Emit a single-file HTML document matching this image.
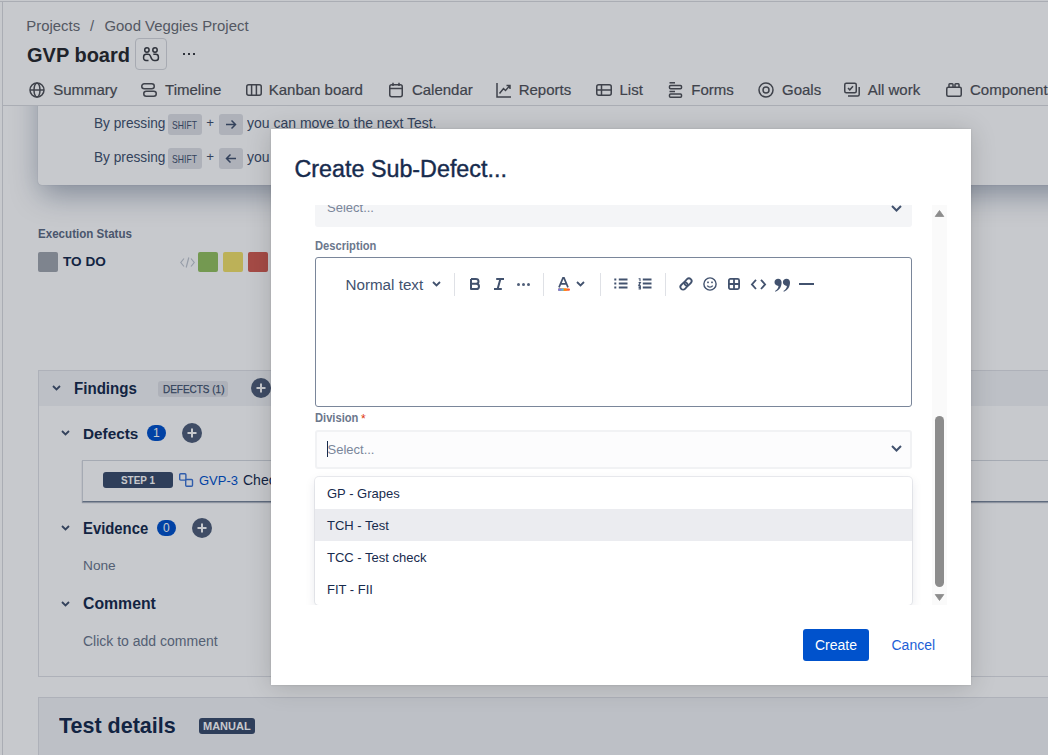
<!DOCTYPE html>
<html><head><meta charset="utf-8">
<style>
*{box-sizing:border-box;margin:0;padding:0}
html,body{width:1048px;height:755px;overflow:hidden;background:#fff;font-family:"Liberation Sans",sans-serif;position:relative}
.t{position:absolute;line-height:1;white-space:nowrap}
.a{position:absolute}
svg{position:absolute;overflow:visible}
</style></head><body>

<!-- page frame lines -->
<div class="a" style="left:0;top:1px;width:1048px;height:1px;background:#dadbdf"></div>
<div class="a" style="left:2px;top:2px;width:1px;height:753px;background:#dadbdf"></div>

<!-- background card (keyboard hints) -->
<div class="a" style="left:38px;top:40px;width:1100px;height:145px;background:#fff;border-radius:4px;box-shadow:0 12px 30px -3px rgba(9,30,66,.37),0 0 1px rgba(9,30,66,.3)"></div>
<div class="t" style="left:94px;top:115.7px;font-size:14.4px;color:#42526e;transform:scaleX(.95);transform-origin:0 0">By pressing</div>
<div class="a" style="left:168px;top:114px;width:34px;height:21px;background:#dfe1e6;border-radius:3px"></div>
<div class="t" style="left:172.3px;top:119.5px;font-size:10.8px;color:#42526e;transform:scaleX(.8);transform-origin:0 0">SHIFT</div>
<div class="t" style="left:206.3px;top:116px;font-size:13.3px;color:#42526e">+</div>
<div class="a" style="left:219px;top:114px;width:24px;height:21px;background:#dfe1e6;border-radius:3px"></div>
<svg style="left:225px;top:118.5px" width="12" height="11" viewBox="0 0 12 11" fill="none" stroke="#42526e" stroke-width="1.5"><path d="M1 5.5H10.5M6.5 1.5L10.5 5.5L6.5 9.5"/></svg>
<div class="t" style="left:246.5px;top:115.7px;font-size:14.4px;color:#42526e;transform:scaleX(.972);transform-origin:0 0">you can move to the next Test.</div>

<div class="t" style="left:94px;top:149.7px;font-size:14.4px;color:#42526e;transform:scaleX(.95);transform-origin:0 0">By pressing</div>
<div class="a" style="left:168px;top:148px;width:34px;height:21px;background:#dfe1e6;border-radius:3px"></div>
<div class="t" style="left:172.3px;top:153.5px;font-size:10.8px;color:#42526e;transform:scaleX(.8);transform-origin:0 0">SHIFT</div>
<div class="t" style="left:206.3px;top:150px;font-size:13.3px;color:#42526e">+</div>
<div class="a" style="left:219px;top:148px;width:24px;height:21px;background:#dfe1e6;border-radius:3px"></div>
<svg style="left:225px;top:152.5px" width="12" height="11" viewBox="0 0 12 11" fill="none" stroke="#42526e" stroke-width="1.5"><path d="M11 5.5H1.5M5.5 1.5L1.5 5.5L5.5 9.5"/></svg>
<div class="t" style="left:246.5px;top:149.7px;font-size:14.4px;color:#42526e;transform:scaleX(.972);transform-origin:0 0">you can move to the previous Test.</div>

<!-- execution status -->
<div class="t" style="left:38px;top:227.8px;font-size:12.4px;font-weight:700;color:#5e6c84;transform:scaleX(.935);transform-origin:0 0">Execution Status</div>
<div class="a" style="left:38px;top:252px;width:20px;height:20px;background:#a2a6ae;border-radius:2px"></div>
<div class="t" style="left:63px;top:255px;font-size:13.6px;font-weight:700;color:#172b4d">TO DO</div>
<svg style="left:180px;top:257px" width="15" height="11" viewBox="0 0 15 11" fill="none" stroke="#c1c7d0" stroke-width="1.2">
 <path d="M4 1.5L0.8 5.5L4 9.5M11 1.5L14.2 5.5L11 9.5M8.8 0.5L6.2 10.5"/>
</svg>
<div class="a" style="left:198px;top:252px;width:20px;height:20px;background:#95c160;border-radius:2px"></div>
<div class="a" style="left:223px;top:252px;width:20px;height:20px;background:#f1e069;border-radius:2px"></div>
<div class="a" style="left:248px;top:252px;width:20px;height:20px;background:#d45d52;border-radius:2px"></div>

<!-- findings panel -->
<div class="a" style="left:38px;top:370px;width:1100px;height:307px;border:1px solid #dfe1e6;border-radius:0"></div>
<div class="a" style="left:39px;top:371px;width:1100px;height:35px;background:#f3f4f6"></div>
<svg style="left:52px;top:385px" width="9" height="6" viewBox="0 0 9 6" fill="none" stroke="#42526e" stroke-width="1.8"><path d="M1 1L4.5 4.5L8 1"/></svg>
<div class="t" style="left:74px;top:380.6px;font-size:15.8px;font-weight:700;color:#172b4d;transform:scaleX(.956);transform-origin:0 0">Findings</div>
<div class="a" style="left:158px;top:381px;width:70px;height:16px;background:#dfe1e6;border-radius:3px"></div>
<div class="t" style="left:162.5px;top:383.5px;font-size:11.4px;color:#42526e;-webkit-text-stroke:.25px #42526e;transform:scaleX(.875);transform-origin:0 0">DEFECTS (1)</div>
<div class="a" style="left:251px;top:378px;width:20px;height:20px;background:#505f79;border-radius:50%"></div>
<svg style="left:251px;top:378px" width="20" height="20" viewBox="0 0 20 20" fill="none" stroke="#fff" stroke-width="2"><path d="M10 5.5V14.5M5.5 10H14.5"/></svg>

<svg style="left:61px;top:430px" width="9" height="6" viewBox="0 0 9 6" fill="none" stroke="#42526e" stroke-width="1.8"><path d="M1 1L4.5 4.5L8 1"/></svg>
<div class="t" style="left:83px;top:426px;font-size:15.3px;font-weight:700;color:#172b4d">Defects</div>
<div class="a" style="left:147px;top:425px;width:19px;height:16px;background:#0052cc;border-radius:8px"></div>
<div class="t" style="left:153px;top:427px;font-size:12px;color:#fff">1</div>
<div class="a" style="left:182px;top:423px;width:20px;height:20px;background:#505f79;border-radius:50%"></div>
<svg style="left:182px;top:423px" width="20" height="20" viewBox="0 0 20 20" fill="none" stroke="#fff" stroke-width="2"><path d="M10 5.5V14.5M5.5 10H14.5"/></svg>

<div class="a" style="left:82px;top:460px;width:1100px;height:42px;border:1px solid #d3d7de;border-bottom:1px solid #7a869a;box-shadow:0 1px 1px rgba(9,30,66,.3)"></div>
<div class="a" style="left:103px;top:472px;width:70px;height:16px;background:#3b4c6b;border-radius:3px"></div>
<div class="t" style="left:120.5px;top:475px;font-size:11px;font-weight:700;color:#fff;transform:scaleX(.9);transform-origin:0 0">STEP 1</div>
<svg style="left:179px;top:473px" width="15" height="15" viewBox="0 0 15 15" fill="none" stroke="#3d74d4" stroke-width="1.4"><rect x="0.7" y="0.7" width="6.2" height="6.4" rx="1"/><rect x="6.7" y="6.5" width="6.8" height="6.8" rx="1"/></svg>
<div class="t" style="left:199px;top:474px;font-size:13px;color:#0052cc">GVP-3</div>
<div class="t" style="left:243px;top:473.2px;font-size:14px;color:#172b4d">Check</div>

<svg style="left:61px;top:525px" width="9" height="6" viewBox="0 0 9 6" fill="none" stroke="#42526e" stroke-width="1.8"><path d="M1 1L4.5 4.5L8 1"/></svg>
<div class="t" style="left:83px;top:520.6px;font-size:15.8px;font-weight:700;color:#172b4d;transform:scaleX(.94);transform-origin:0 0">Evidence</div>
<div class="a" style="left:157px;top:520px;width:19px;height:16px;background:#0052cc;border-radius:8px"></div>
<div class="t" style="left:163px;top:522px;font-size:12px;color:#fff">0</div>
<div class="a" style="left:192px;top:518px;width:20px;height:20px;background:#505f79;border-radius:50%"></div>
<svg style="left:192px;top:518px" width="20" height="20" viewBox="0 0 20 20" fill="none" stroke="#fff" stroke-width="2"><path d="M10 5.5V14.5M5.5 10H14.5"/></svg>

<div class="t" style="left:83px;top:559.4px;font-size:13.7px;color:#6b778c">None</div>
<svg style="left:61px;top:601px" width="9" height="6" viewBox="0 0 9 6" fill="none" stroke="#42526e" stroke-width="1.8"><path d="M1 1L4.5 4.5L8 1"/></svg>
<div class="t" style="left:83px;top:595.6px;font-size:15.8px;font-weight:700;color:#172b4d">Comment</div>
<div class="t" style="left:83px;top:634.1px;font-size:14px;color:#6b778c">Click to add comment</div>

<!-- test details panel -->
<div class="a" style="left:38px;top:697px;width:1100px;height:100px;border:1px solid #dfe1e6;border-radius:0;background:#f3f4f6"></div>
<div class="t" style="left:59px;top:714.8px;font-size:22.5px;font-weight:700;color:#172b4d;transform:scaleX(.955);transform-origin:0 0">Test details</div>
<div class="a" style="left:199px;top:718px;width:56px;height:16px;background:#3b4c6b;border-radius:3px"></div>
<div class="t" style="left:203px;top:721px;font-size:11px;font-weight:700;color:#fff">MANUAL</div>

<!-- header -->
<div class="a" style="left:3px;top:2px;width:1045px;height:103px;background:#fff"></div>
<div class="a" style="left:3px;top:105px;width:1045px;height:1px;background:#dadbdf"></div>
<div class="t" style="left:26.3px;top:19px;font-size:14.9px;color:#6b6e76">Projects</div>
<div class="t" style="left:90px;top:19.1px;font-size:14.7px;color:#6b6e76">/</div>
<div class="t" style="left:104.5px;top:19px;font-size:14.9px;color:#6b6e76">Good Veggies Project</div>
<div class="t" style="left:27px;top:45.2px;font-size:20px;font-weight:700;color:#292a2e">GVP board</div>
<div class="a" style="left:135px;top:38px;width:32px;height:32px;border:1px solid #d6d8dc;border-radius:4px"></div>
<svg style="left:143px;top:46px" width="16" height="16" viewBox="0 0 16 16" fill="none" stroke="#3b3d43" stroke-width="1.5">
 <circle cx="3.9" cy="4" r="2.2"/><circle cx="12" cy="4" r="2.2"/>
 <path d="M5.5 14.4H3C1.6 14.4 0.6 13.3 0.6 11.9V11C0.6 9.5 1.8 8.3 3.3 8.3H5C6.2 8.3 7 9 7.5 10.2L8.4 12.4C9 13.8 9.8 14.4 11 14.4H13C14.4 14.4 15.4 13.3 15.4 11.9V11C15.4 9.5 14.2 8.3 12.7 8.3H10.3"/>
</svg>
<div class="a" style="left:183px;top:53px;width:2px;height:2px;background:#3b3d43"></div>
<div class="a" style="left:188px;top:53px;width:2px;height:2px;background:#3b3d43"></div>
<div class="a" style="left:193px;top:53px;width:2px;height:2px;background:#3b3d43"></div>

<!-- tabs -->
<div class="t" style="left:53.2px;top:82.3px;font-size:15px;color:#505258;-webkit-text-stroke:.2px #505258">Summary</div>
<div class="t" style="left:165.1px;top:82.3px;font-size:15px;color:#505258;-webkit-text-stroke:.2px #505258">Timeline</div>
<div class="t" style="left:268.7px;top:82.3px;font-size:15px;color:#505258;-webkit-text-stroke:.2px #505258">Kanban board</div>
<div class="t" style="left:411.9px;top:82.3px;font-size:15px;color:#505258;-webkit-text-stroke:.2px #505258">Calendar</div>
<div class="t" style="left:518.7px;top:82.3px;font-size:15px;color:#505258;-webkit-text-stroke:.2px #505258">Reports</div>
<div class="t" style="left:619.5px;top:82.3px;font-size:15px;color:#505258;-webkit-text-stroke:.2px #505258">List</div>
<div class="t" style="left:691.3px;top:82.3px;font-size:15px;color:#505258;-webkit-text-stroke:.2px #505258">Forms</div>
<div class="t" style="left:782px;top:82.3px;font-size:15px;color:#505258;-webkit-text-stroke:.2px #505258">Goals</div>
<div class="t" style="left:867.7px;top:82.3px;font-size:15px;color:#505258;-webkit-text-stroke:.2px #505258">All work</div>
<div class="t" style="left:970px;top:82.3px;font-size:15px;color:#505258;-webkit-text-stroke:.2px #505258">Components</div>
<g></g>
<svg style="left:29px;top:82px" width="16" height="16" viewBox="0 0 16 16" fill="none" stroke="#505258" stroke-width="1.5">
 <circle cx="8" cy="8" r="7"/><path d="M1 8H15"/><ellipse cx="8" cy="8" rx="3" ry="7"/>
</svg>
<svg style="left:141px;top:82px" width="16" height="16" viewBox="0 0 16 16" fill="none" stroke="#505258" stroke-width="1.5">
 <rect x="0.75" y="1.75" width="12.5" height="5" rx="2.5"/><rect x="2.75" y="9.25" width="12.5" height="5" rx="2.5"/>
</svg>
<svg style="left:246px;top:82px" width="16" height="16" viewBox="0 0 16 16" fill="none" stroke="#505258" stroke-width="1.5">
 <rect x="0.75" y="2.75" width="14.5" height="10.5" rx="2"/><path d="M5.6 2.75V13.25M10.4 2.75V13.25"/>
</svg>
<svg style="left:388px;top:82px" width="16" height="16" viewBox="0 0 16 16" fill="none" stroke="#505258" stroke-width="1.5">
 <rect x="1.75" y="2.75" width="12.5" height="12" rx="2"/><path d="M1.75 6.5H14.25M5 0.8V4M11 0.8V4"/>
</svg>
<svg style="left:496px;top:82px" width="16" height="16" viewBox="0 0 16 16" fill="none" stroke="#505258" stroke-width="1.5">
 <path d="M1 1V15H15"/><path d="M3.5 11.5L7.5 6.5L9.5 8.5L14 3.5M10.5 3.5H14V7"/>
</svg>
<svg style="left:596px;top:82px" width="16" height="16" viewBox="0 0 16 16" fill="none" stroke="#505258" stroke-width="1.5">
 <rect x="0.75" y="2.75" width="14.5" height="10.5" rx="2"/><path d="M0.75 8H15.25M5.5 2.75V13.25"/>
</svg>
<svg style="left:668px;top:82px" width="16" height="16" viewBox="0 0 16 16" fill="none" stroke="#505258" stroke-width="1.5">
 <path d="M1.5 0.8H7"/><rect x="1.5" y="3.5" width="12" height="3.2" rx="1"/><path d="M1.5 9.5H7"/><rect x="1.5" y="12" width="12" height="3.2" rx="1"/>
</svg>
<svg style="left:758px;top:82px" width="16" height="16" viewBox="0 0 16 16" fill="none" stroke="#505258" stroke-width="1.5">
 <circle cx="8" cy="8" r="7"/><circle cx="8" cy="8" r="3"/>
</svg>
<svg style="left:844px;top:82px" width="16" height="16" viewBox="0 0 16 16" fill="none" stroke="#505258" stroke-width="1.5">
 <rect x="0.75" y="1.25" width="11.5" height="9.5" rx="1.5"/><path d="M4 6L5.8 7.8L9 4.3"/><path d="M15.2 5V12.5C15.2 13.3 14.5 14 13.7 14H4"/>
</svg>
<svg style="left:946px;top:82px" width="16" height="16" viewBox="0 0 16 16" fill="none" stroke="#505258" stroke-width="1.5">
 <rect x="0.75" y="5.25" width="14.5" height="9" rx="1.5"/><path d="M3 5.25V2.5C3 2 3.4 1.75 3.8 1.75H6.2C6.6 1.75 7 2 7 2.5V5.25M9 5.25V2.5C9 2 9.4 1.75 9.8 1.75H12.2C12.6 1.75 13 2 13 2.5V5.25"/>
</svg>

<!-- overlay -->
<div class="a" style="left:0;top:0;width:1048px;height:755px;background:rgba(5,12,31,.225)"></div>

<!-- modal -->
<div class="a" style="left:271px;top:129px;width:700px;height:556px;background:#fff;box-shadow:0 2px 24px rgba(0,0,0,.17),0 0 2px rgba(0,0,0,.12)"></div>
<div class="t" style="left:294.5px;top:158px;font-size:23.3px;color:#172b4d;-webkit-text-stroke:.4px #172b4d">Create Sub-Defect...</div>

<!-- scroll area -->
<div class="a" style="left:271px;top:205px;width:676px;height:400px;overflow:hidden">
 <!-- positions below are relative: subtract (271,205) -->
 <div class="a" style="left:44px;top:-33px;width:597px;height:54.5px;background:#f4f5f7;border-radius:3px"></div>
 <div class="t" style="left:56px;top:-4px;font-size:13px;color:#7a869a">Select...</div>
 <svg style="left:619.5px;top:-1.5px" width="11" height="9" viewBox="0 0 11 9" fill="none" stroke="#42526e" stroke-width="2"><path d="M1 2L5.5 6.5L10 2"/></svg>

 <div class="t" style="left:44px;top:34.7px;font-size:12px;font-weight:700;color:#6b778c;transform:scaleX(.93);transform-origin:0 0">Description</div>
 <div class="a" style="left:44px;top:52px;width:597px;height:150px;border:1px solid #7a869a;border-radius:3px"></div>
 <div class="t" style="left:74.5px;top:71.6px;font-size:15.2px;color:#42526e">Normal text</div>
 <svg style="left:161px;top:76px" width="9" height="6" viewBox="0 0 9 6" fill="none" stroke="#42526e" stroke-width="1.8"><path d="M1 1L4.5 4.5L8 1"/></svg>
 <div class="a" style="left:183px;top:67.5px;width:1px;height:23px;background:#dfe1e6"></div>
 <svg style="left:199px;top:73px" width="10" height="12" viewBox="0 0 10 12" fill="none" stroke="#42526e" stroke-width="2" stroke-linejoin="round"><path d="M1 1H5.8C7.6 1 8.5 2 8.5 3.4C8.5 4.8 7.6 5.8 5.8 5.8H1M1 5.8H6.2C8 5.8 9 6.9 9 8.4C9 9.9 8 11 6.2 11H1V1"/></svg>
 <svg style="left:222px;top:73px" width="11" height="12" viewBox="0 0 11 12" fill="none" stroke="#42526e" stroke-width="2"><path d="M3.2 1H11M1 11H8.8M7.4 1L4.6 11"/></svg>
 <div class="a" style="left:245.5px;top:78px;width:3px;height:3px;background:#505f79;border-radius:50%"></div>
 <div class="a" style="left:250.5px;top:78px;width:3px;height:3px;background:#505f79;border-radius:50%"></div>
 <div class="a" style="left:255.5px;top:78px;width:3px;height:3px;background:#505f79;border-radius:50%"></div>
 <div class="a" style="left:272px;top:67.5px;width:1px;height:23px;background:#dfe1e6"></div>
 <svg style="left:286.8px;top:72px" width="12" height="14" viewBox="0 0 12 14" fill="none"><path d="M1 10.3L5 0.9H6L10 10.3M2.7 6.8H8.3" stroke="#42526e" stroke-width="1.7"/>
 <rect x="0" y="11.4" width="12" height="2.4" rx="1.2" fill="#ff5630"/><rect x="0" y="11.4" width="9" height="2.4" rx="1.2" fill="#ff8b00"/><rect x="0" y="11.4" width="6" height="2.4" rx="1.2" fill="#4fc3e6"/><rect x="0" y="11.4" width="3.5" height="2.4" rx="1.2" fill="#8777d9"/></svg>
 <svg style="left:304.5px;top:76px" width="9" height="6" viewBox="0 0 9 6" fill="none" stroke="#42526e" stroke-width="1.8"><path d="M1 1L4.5 4.5L8 1"/></svg>
 <div class="a" style="left:329px;top:67.5px;width:1px;height:23px;background:#dfe1e6"></div>
 <svg style="left:343px;top:73px" width="14" height="11" viewBox="0 0 14 11" fill="none" stroke="#42526e" stroke-width="1.8"><path d="M0.3 1.5H2.3M0.3 5.5H2.3M0.3 9.5H2.3M4.8 1.5H13.5M4.8 5.5H13.5M4.8 9.5H13.5"/></svg>
 <svg style="left:367px;top:73px" width="14" height="12" viewBox="0 0 14 12" fill="none" stroke="#42526e"><path stroke-width="1.1" d="M0.6 0.8H2V3.2M0.6 4.6H2.4L0.8 7.2H2.6M0.6 8.2H2.4V11H0.6M0.6 9.6H2.2"/><path stroke-width="1.8" d="M4.8 1.5H13.5M4.8 5.5H13.5M4.8 9.5H13.5"/></svg>
 <div class="a" style="left:394px;top:67.5px;width:1px;height:23px;background:#dfe1e6"></div>
 <svg style="left:408px;top:72px" width="14" height="14" viewBox="0 0 14 14" fill="none" stroke="#42526e" stroke-width="1.8"><g transform="rotate(-45 7 7)"><rect x="0.2" y="4.3" width="8" height="5.4" rx="2.7"/><rect x="5.8" y="4.3" width="8" height="5.4" rx="2.7"/></g></svg>
 <svg style="left:432px;top:72px" width="14" height="14" viewBox="0 0 14 14" fill="none" stroke="#42526e" stroke-width="1.4"><circle cx="7" cy="7" r="6.1"/><path d="M4.3 8.6C5 9.6 5.9 10.1 7 10.1C8.1 10.1 9 9.6 9.7 8.6"/><path stroke-width="1.1" d="M5 4.4V6.2M4.1 5.3H5.9M9 4.4V6.2M8.1 5.3H9.9"/></svg>
 <svg style="left:457px;top:73.2px" width="12" height="12" viewBox="0 0 12 12" fill="none" stroke="#42526e" stroke-width="1.8"><rect x="0.9" y="0.9" width="10.2" height="10.2" rx="1.5"/><path d="M6 0.9V11.1M0.9 6H11.1"/></svg>
 <svg style="left:479.5px;top:74px" width="15" height="11" viewBox="0 0 15 11" fill="none" stroke="#42526e" stroke-width="1.8"><path d="M5 0.8L0.9 5.4L5 10M10 0.8L14.1 5.4L10 10"/></svg>
 <svg style="left:503px;top:72.5px" width="17" height="15" viewBox="0 0 17 15" fill="#42526e"><path id="q1" d="M7.6 4.6C7.6 9 5.3 12.3 1.5 13.8L1 13C3.2 11.6 4.3 10 4.5 8C2.3 7.9 0.5 6.3 0.5 4.3C0.5 2.3 2.1 0.8 4.1 0.8C6.3 0.8 7.6 2.4 7.6 4.6Z"/><path transform="translate(8.4 0)" d="M7.6 4.6C7.6 9 5.3 12.3 1.5 13.8L1 13C3.2 11.6 4.3 10 4.5 8C2.3 7.9 0.5 6.3 0.5 4.3C0.5 2.3 2.1 0.8 4.1 0.8C6.3 0.8 7.6 2.4 7.6 4.6Z"/></svg>
 <div class="a" style="left:528px;top:78px;width:14.5px;height:2px;background:#42526e"></div>

 <div class="t" style="left:44.3px;top:206.8px;font-size:12px;font-weight:700;color:#6b778c;transform:scaleX(.93);transform-origin:0 0">Division</div>
 <div class="t" style="left:90px;top:207.5px;font-size:12px;color:#de350b">*</div>
 <div class="a" style="left:44px;top:224.5px;width:597px;height:39px;border:2px solid #f1f2f4;background:#fcfcfd;border-radius:3px"></div>
 <div class="a" style="left:56px;top:236px;width:1.3px;height:16px;background:#172b4d"></div>
 <div class="t" style="left:56.5px;top:238px;font-size:13px;color:#7a869a">Select...</div>
 <svg style="left:620px;top:240px" width="11" height="7" viewBox="0 0 11 7" fill="none" stroke="#42526e" stroke-width="2"><path d="M1 1L5.5 5.5L10 1"/></svg>

 <div class="a" style="left:44px;top:271.5px;width:596.5px;height:128.5px;background:#fff;border-radius:4px;box-shadow:0 0 0 1px rgba(9,30,66,.08),0 4px 11px rgba(9,30,66,.1)"></div>
 <div class="a" style="left:44px;top:304px;width:596.5px;height:32px;background:#ebecf0"></div>
 <div class="t" style="left:56px;top:281.8px;font-size:13px;color:#172b4d">GP - Grapes</div>
 <div class="t" style="left:56px;top:313.8px;font-size:13px;color:#172b4d">TCH - Test</div>
 <div class="t" style="left:56px;top:345.8px;font-size:13px;color:#172b4d">TCC - Test check</div>
 <div class="t" style="left:56px;top:377.8px;font-size:13px;color:#172b4d">FIT - FII</div>
</div>

<!-- scrollbar -->
<div class="a" style="left:932px;top:205px;width:15px;height:400px;background:#fafafa"></div>
<div class="a" style="left:935px;top:416px;width:9px;height:171px;background:#8c8c8c;border-radius:4.5px"></div>
<svg style="left:935px;top:210px" width="9" height="7" viewBox="0 0 9 7"><path d="M4.5 0.5L8.8 6.5H0.2Z" fill="#8c8c8c" stroke="#8c8c8c" stroke-width="0.8" stroke-linejoin="round"/></svg>
<svg style="left:935px;top:594px" width="9" height="7" viewBox="0 0 9 7"><path d="M4.5 6.5L8.8 0.5H0.2Z" fill="#8c8c8c" stroke="#8c8c8c" stroke-width="0.8" stroke-linejoin="round"/></svg>

<div class="a" style="left:803px;top:629px;width:66px;height:32px;background:#0052cc;border-radius:3px"></div>
<div class="t" style="left:815px;top:638px;font-size:14px;color:#fff">Create</div>
<div class="t" style="left:891.5px;top:638px;font-size:14px;color:#1d60d6">Cancel</div>

</body></html>
